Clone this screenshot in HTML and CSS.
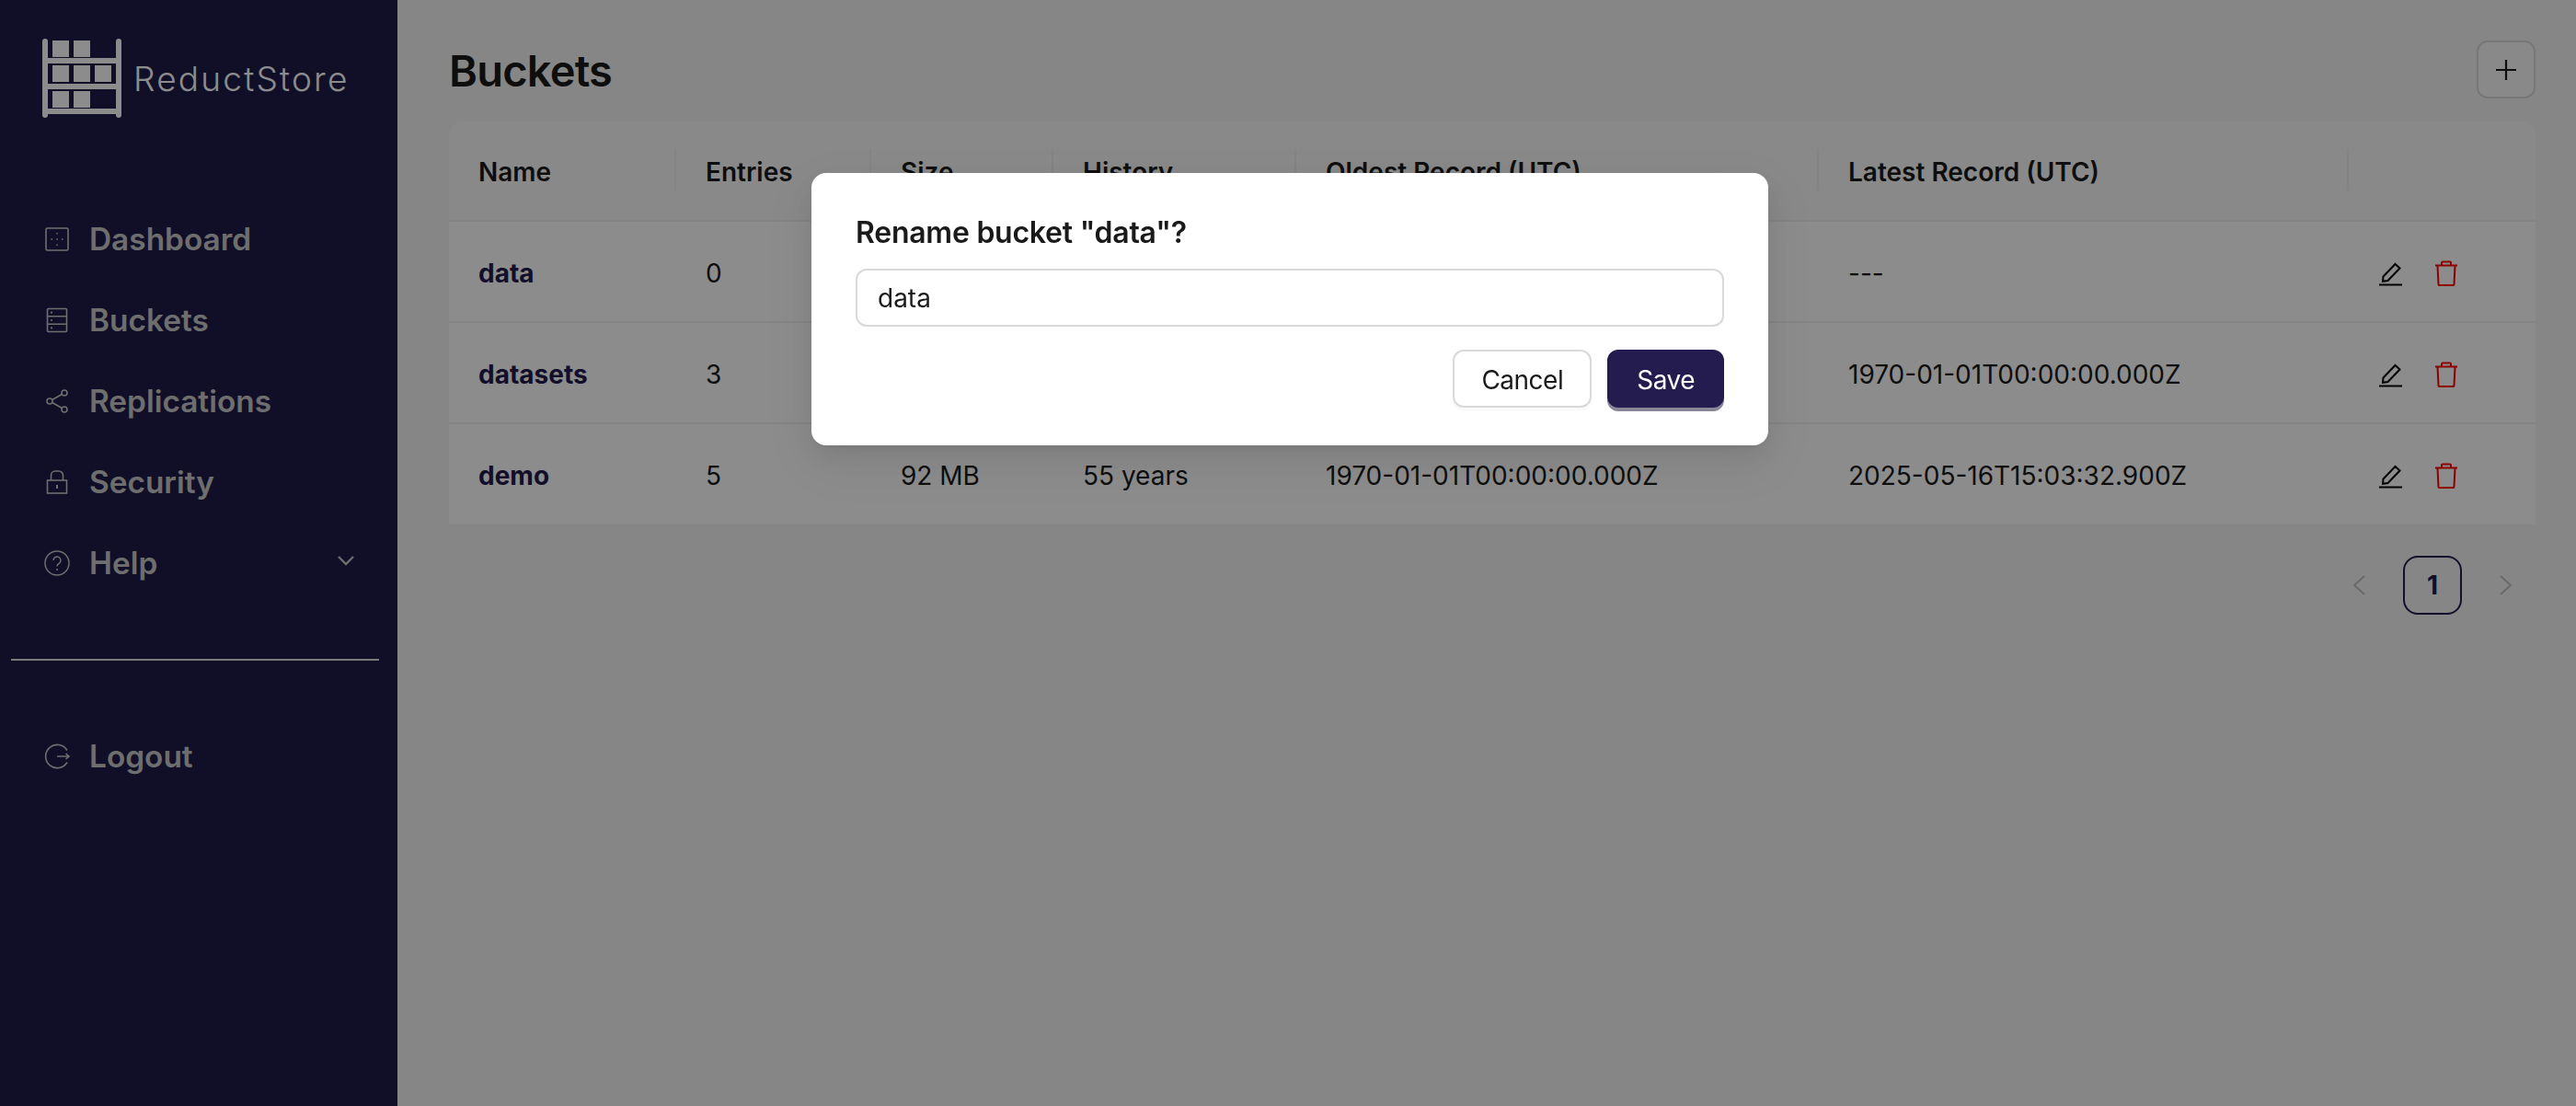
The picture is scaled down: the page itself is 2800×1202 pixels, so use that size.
FILE: index.html
```html
<!DOCTYPE html>
<html lang="en">
<head>
  <meta charset="UTF-8" />
  <title>Buckets - ReductStore</title>
  <link rel="stylesheet" href="styles.css">
</head>
<body>
  <div class="layout">
    <!-- Sidebar -->
    <aside class="sidebar">
      <div class="logo">
        <svg class="logo-mark" viewBox="0 0 86 86" width="86" height="86" fill="currentColor">
          <rect x="0" y="0" width="6" height="86" rx="3"/>
          <rect x="80" y="0" width="6" height="86" rx="3"/>
          <rect x="3" y="21" width="80" height="6"/>
          <rect x="3" y="49" width="80" height="6"/>
          <rect x="3" y="76" width="80" height="6"/>
          <rect x="11" y="2" width="18" height="18"/>
          <rect x="34" y="2" width="18" height="18"/>
          <rect x="11" y="29" width="18" height="18"/>
          <rect x="34" y="29" width="18" height="18"/>
          <rect x="57" y="29" width="18" height="18"/>
          <rect x="11" y="57" width="18" height="18"/>
          <rect x="34" y="57" width="18" height="18"/>
        </svg>
        <span class="logo-text">ReductStore</span>
      </div>

      <nav class="nav">
        <a class="nav-item">
          <svg class="nav-icon" viewBox="0 0 28 28" fill="none" stroke="currentColor" stroke-width="1.6">
            <rect x="2" y="2" width="24" height="24" rx="1.5"/>
            <path d="M14 7v1.6M14 19.4V21M7.5 14h1.6M13.2 14h1.6M19 14h1.6" stroke-width="1.5"/>
          </svg>
          <span>Dashboard</span>
        </a>
        <a class="nav-item">
          <svg class="nav-icon" viewBox="0 0 28 28" fill="none" stroke="currentColor" stroke-width="1.6">
            <rect x="3.5" y="1.5" width="21" height="25" rx="1"/>
            <path d="M3.5 9.8h21M3.5 18.2h21"/>
            <path d="M7 5.6h2M7 14h2M7 22.4h2"/>
          </svg>
          <span>Buckets</span>
        </a>
        <a class="nav-item">
          <svg class="nav-icon" viewBox="0 0 28 28" fill="none" stroke="currentColor" stroke-width="1.6">
            <circle cx="22" cy="5" r="3"/>
            <circle cx="6" cy="14" r="3"/>
            <circle cx="22" cy="23" r="3"/>
            <path d="M8.7 12.5 19.4 6.5M8.7 15.5l10.7 6"/>
          </svg>
          <span>Replications</span>
        </a>
        <a class="nav-item">
          <svg class="nav-icon" viewBox="0 0 28 28" fill="none" stroke="currentColor" stroke-width="1.6">
            <rect x="3.5" y="12" width="21" height="14"/>
            <path d="M7.5 12V6.5a4.5 4.5 0 0 1 4.5-4.5h4a4.5 4.5 0 0 1 4.5 4.5V12"/>
            <path d="M14 17v4" stroke-width="2"/>
          </svg>
          <span>Security</span>
        </a>
        <a class="nav-item">
          <svg class="nav-icon" viewBox="0 0 28 28" fill="none" stroke="currentColor" stroke-width="1.5">
            <circle cx="14" cy="14" r="13"/>
            <path d="M10 11a4 4 0 1 1 6.2 3.3c-1.4.9-2.2 1.6-2.2 3.2"/>
            <path d="M14 20.2v1.8" stroke-width="1.8"/>
          </svg>
          <span>Help</span>
          <svg class="nav-caret" viewBox="0 0 20 14" fill="none" stroke="currentColor" stroke-width="2.4">
            <path d="M2 3l8 8 8-8"/>
          </svg>
        </a>
      </nav>

      <hr class="nav-divider" />

      <nav class="nav">
        <a class="nav-item">
          <svg class="nav-icon" viewBox="0 0 28 28" fill="none" stroke="currentColor" stroke-width="1.6">
            <path d="M25 7.5A12.6 12.6 0 1 0 25 20.5"/>
            <path d="M14 14h13M23.5 11l3.5 3-3.5 3"/>
          </svg>
          <span>Logout</span>
        </a>
      </nav>
    </aside>

    <!-- Buckets page -->
    <main class="content">
      <div class="page-head">
        <h1>Buckets</h1>
        <button class="add-btn">
          <svg viewBox="0 0 24 24" width="24" height="24" fill="none" stroke="currentColor" stroke-width="2.2">
            <path d="M12 1v22M1 12h22"/>
          </svg>
        </button>
      </div>

      <table class="buckets">
        <thead>
          <tr>
            <th class="col-name">Name</th>
            <th class="col-entries">Entries</th>
            <th class="col-size">Size</th>
            <th class="col-history">History</th>
            <th class="col-oldest">Oldest Record (UTC)</th>
            <th class="col-latest">Latest Record (UTC)</th>
            <th class="col-actions"></th>
          </tr>
        </thead>
        <tbody>
          <tr>
            <td class="bucket-name">data</td>
            <td>0</td>
            <td></td>
            <td></td>
            <td></td>
            <td>---</td>
            <td>
              <div class="actions">
                <svg class="act-icon" viewBox="0 0 28 28" fill="none" stroke="currentColor" stroke-width="2"><path d="M1 26.5h25"/><path d="M5.5 17.5 18.5 4l5 4.5L10.5 22l-5.500 .8z"/></svg>
                <svg class="act-icon del" viewBox="0 0 28 28" fill="none" stroke="currentColor" stroke-width="2"><path d="M2 5.500h24"/><path d="M9 5.500V2.500a1 1 0 0 1 1-1h8a1 1 0 0 1 1 1v3"/><path d="M4.500 5.500l1 20.500a1 1 0 0 0 1 1h15a1 1 0 0 0 1-1l1-20.500"/></svg>
              </div>
            </td>
          </tr>
          <tr>
            <td class="bucket-name">datasets</td>
            <td>3</td>
            <td></td>
            <td></td>
            <td></td>
            <td>1970-01-01T00:00:00.000Z</td>
            <td>
              <div class="actions">
                <svg class="act-icon" viewBox="0 0 28 28" fill="none" stroke="currentColor" stroke-width="2"><path d="M1 26.5h25"/><path d="M5.5 17.5 18.5 4l5 4.5L10.5 22l-5.500 .8z"/></svg>
                <svg class="act-icon del" viewBox="0 0 28 28" fill="none" stroke="currentColor" stroke-width="2"><path d="M2 5.500h24"/><path d="M9 5.500V2.500a1 1 0 0 1 1-1h8a1 1 0 0 1 1 1v3"/><path d="M4.500 5.500l1 20.500a1 1 0 0 0 1 1h15a1 1 0 0 0 1-1l1-20.500"/></svg>
              </div>
            </td>
          </tr>
          <tr>
            <td class="bucket-name">demo</td>
            <td>5</td>
            <td>92 MB</td>
            <td>55 years</td>
            <td>1970-01-01T00:00:00.000Z</td>
            <td>2025-05-16T15:03:32.900Z</td>
            <td>
              <div class="actions">
                <svg class="act-icon" viewBox="0 0 28 28" fill="none" stroke="currentColor" stroke-width="2"><path d="M1 26.5h25"/><path d="M5.5 17.5 18.5 4l5 4.5L10.5 22l-5.500 .8z"/></svg>
                <svg class="act-icon del" viewBox="0 0 28 28" fill="none" stroke="currentColor" stroke-width="2"><path d="M2 5.500h24"/><path d="M9 5.500V2.500a1 1 0 0 1 1-1h8a1 1 0 0 1 1 1v3"/><path d="M4.500 5.500l1 20.500a1 1 0 0 0 1 1h15a1 1 0 0 0 1-1l1-20.500"/></svg>
              </div>
            </td>
          </tr>
        </tbody>
      </table>

      <div class="pager">
        <span class="pager-arrow">
          <svg viewBox="0 0 14 24" width="14" height="24" fill="none" stroke="currentColor" stroke-width="2"><path d="M13 2 2 12l11 10"/></svg>
        </span>
        <span class="pager-page">1</span>
        <span class="pager-arrow">
          <svg viewBox="0 0 14 24" width="14" height="24" fill="none" stroke="currentColor" stroke-width="2"><path d="M1 2l11 10L1 22"/></svg>
        </span>
      </div>
    </main>
  </div>

  <!-- Rename dialog -->
  <div class="mask">
    <div class="modal">
      <div class="modal-title">Rename bucket "data"?</div>
      <input class="modal-input" type="text" value="data" />
      <div class="modal-footer">
        <button class="btn btn-cancel">Cancel</button>
        <button class="btn btn-primary">Save</button>
      </div>
    </div>
  </div>
</body>
</html>
```

FILE: styles.css
```css
* { margin: 0; padding: 0; box-sizing: border-box; }
body {
  font-family: Inter, "Liberation Sans", sans-serif;
  font-size: 28px;
  color: #1a1a1a;
  background: #f5f5f5;
  height: 1202px;
  overflow: hidden;
}
.layout {
  display: flex;
  height: 1202px;
}

/* sidebar */
.sidebar {
  width: 432px;
  flex-shrink: 0;
  background: #1f1c4a;
  color: #c8c8c8;
}
.logo {
  display: flex;
  align-items: flex-start;
  height: 216px;
  padding: 42px 0 0 46px;
  color: #fff;
}
.logo-text {
  margin: 22px 0 0 13px;
  font-size: 37px;
  font-weight: 300;
  line-height: 44px;
  letter-spacing: 2.2px;
}
.nav-item {
  display: flex;
  align-items: center;
  height: 88px;
  padding-left: 48px;
  font-size: 33.4px;
  font-weight: 600;
}
.nav-icon {
  width: 28px;
  height: 28px;
  margin-right: 21px;
}
.nav-caret {
  width: 20px;
  height: 14px;
  margin-left: auto;
  margin-right: 46px;
  margin-bottom: 6px;
}
.nav-divider {
  border: none;
  height: 2px;
  background: #e0e0e0;
  margin: 60px 20px 60px 12px;
}

/* main area */
.content {
  flex: 1;
  padding: 44px 44px 0 56px;
}
.page-head {
  display: flex;
  justify-content: space-between;
  align-items: center;
  margin-bottom: 25px;
}
h1 {
  font-size: 47px;
  font-weight: 600;
  line-height: 61px;
  letter-spacing: -0.8px;
  padding-top: 2px;
}
.add-btn {
  display: flex;
  align-items: center;
  justify-content: center;
  width: 64px;
  height: 63px;
  background: #fafafa;
  border: 2px solid #d9d9d9;
  border-radius: 12px;
  color: #1a1a1a;
}

.buckets {
  width: 100%;
  table-layout: fixed;
  border-collapse: separate;
  border-spacing: 0;
  background: #fff;
  border-radius: 16px 16px 0 0;
}
.buckets th {
  position: relative;
  height: 109px;
  padding: 2px 32px 0;
  text-align: left;
  font-weight: 600;
  background: #fafafa;
  border-bottom: 2px solid #f0f0f0;
}
.buckets th:first-child { border-top-left-radius: 16px; }
.buckets th:last-child { border-top-right-radius: 16px; }
.buckets th:not(:last-child)::after {
  content: "";
  position: absolute;
  top: 31px;
  right: 0;
  width: 2px;
  height: 44px;
  background: #f0f0f0;
}
.col-name { width: 247px; }
.col-entries { width: 212px; }
.col-size { width: 198px; }
.col-history { width: 264px; }
.col-oldest { width: 568px; }
.col-latest { width: 576px; }
.buckets td {
  height: 110px;
  padding: 3px 32px 0;
  border-bottom: 2px solid #f0f0f0;
}
.buckets tr:last-child td { border-bottom: none; height: 109px; }
.bucket-name {
  font-weight: 700;
  color: #241b4e;
}
.actions {
  display: flex;
  gap: 32px;
}
.act-icon {
  width: 28px;
  height: 28px;
  color: #000;
}
.act-icon.del { color: #ff0000; }

.pager {
  display: flex;
  justify-content: flex-end;
  gap: 16px;
  margin-top: 34px;
}
.pager-arrow, .pager-page {
  display: flex;
  align-items: center;
  justify-content: center;
  width: 64px;
  height: 64px;
}
.pager-arrow { color: #bfbfbf; }
.pager-page {
  border: 2px solid #241b4e;
  border-radius: 16px;
  color: #241b4e;
  font-weight: 700;
  font-size: 28px;
}

/* modal */
.mask {
  position: fixed;
  inset: 0;
  display: flex;
  justify-content: center;
  align-items: flex-start;
  padding: 188px 0 0 4px;
  background: rgba(0, 0, 0, 0.45);
}
.modal {
  width: 1040px;
  height: 296px;
  padding: 40px 48px;
  background: #fff;
  border-radius: 16px;
  box-shadow: 0 12px 32px rgba(0, 0, 0, 0.08), 0 6px 12px -8px rgba(0, 0, 0, 0.12), 0 18px 56px 16px rgba(0, 0, 0, 0.05);
}
.modal-title {
  font-size: 32px;
  font-weight: 600;
  line-height: 50px;
  letter-spacing: -0.25px;
  margin-bottom: 14px;
}
.modal-input {
  display: block;
  width: 100%;
  height: 63px;
  padding: 0 22px;
  font: inherit;
  font-size: 28px;
  color: #1a1a1a;
  border: 2px solid #d9d9d9;
  border-radius: 12px;
}
.modal-footer {
  display: flex;
  justify-content: flex-end;
  gap: 17px;
  margin-top: 25px;
}
.btn {
  height: 63px;
  padding: 2px 29px 0;
  font: inherit;
  font-size: 28px;
  letter-spacing: -0.5px;
  color: #1a1a1a;
  background: #fff;
  border: 2px solid #d9d9d9;
  border-radius: 12px;
  box-shadow: 0 4px 0 rgba(0, 0, 0, 0.02);
}
.btn-primary {
  padding: 2px 30px 0;
  color: #fff;
  background: #241b4e;
  border-color: #241b4e;
  box-shadow: 0 4px 0 #8a8699;
}
```
